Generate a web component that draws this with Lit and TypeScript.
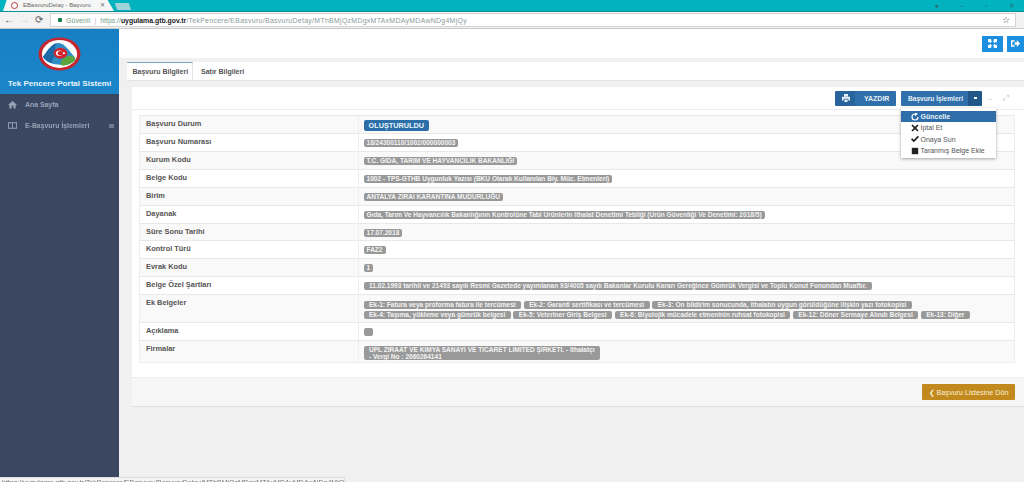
import { LitElement, html, css, svg } from "lit";
import { customElement } from "lit/decorators.js";

const rows: { label: string; badges: string[]; cls?: string }[] = [
  { label: "Başvuru Durum", badges: ["OLUŞTURULDU"], cls: "status" },
  { label: "Başvuru Numarası", badges: ["18/24300110/1002/000000003"] },
  { label: "Kurum Kodu", badges: ["T.C. GIDA, TARIM VE HAYVANCILIK BAKANLIĞI"] },
  { label: "Belge Kodu", badges: ["1002 - TPS-GTHB Uygunluk Yazısı (BKÜ Olarak Kullanılan Biy. Müc. Etmenleri)"] },
  { label: "Birim", badges: ["ANTALYA ZİRAİ KARANTİNA MÜDÜRLÜĞÜ"] },
  { label: "Dayanak", badges: ["Gıda, Tarım Ve Hayvancılık Bakanlığının Kontrolüne Tabi Ürünlerin İthalat Denetimi Tebliği (Ürün Güvenliği Ve Denetimi: 2018/5)"] },
  { label: "Süre Sonu Tarihi", badges: ["17.07.2018"], cls: "short" },
  { label: "Kontrol Türü", badges: ["FAZ2"] },
  { label: "Evrak Kodu", badges: ["1"] },
  { label: "Belge Özel Şartları", badges: ["11.02.1993 tarihli ve 21493 sayılı Resmi Gazetede yayımlanan 93/4005 sayılı Bakanlar Kurulu Kararı Gereğince Gümrük Vergisi ve Toplu Konut Fonundan Muaftır."], cls: "pad" },
  { label: "Ek Belgeler", badges: ["Ek-1: Fatura veya proforma fatura ile tercümesi", "Ek-2: Garanti sertifikası ve tercümesi", "Ek-3: Ön bildirim sonucunda, ithalatın uygun görüldüğüne ilişkin yazı fotokopisi", "Ek-4: Taşıma, yükleme veya gümrük belgesi", "Ek-5: Veteriner Giriş Belgesi", "Ek-6: Biyolojik mücadele etmeninin ruhsat fotokopisi", "Ek-12: Döner Sermaye Alındı Belgesi", "Ek-13: Diğer"], cls: "pad multi" },
  { label: "Açıklama", badges: [""], cls: "empty" },
  { label: "Firmalar", badges: ["UPL ZİRAAT VE KİMYA SANAYİ VE TİCARET LİMİTED ŞİRKETİ. - İthalatçı\n- Vergi No : 2060264141"], cls: "pad firm" },
];

const logo = svg`<svg class="logo" viewBox="0 0 44 44" width="43" height="34" preserveAspectRatio="none">
  <circle cx="22" cy="22" r="21.500" fill="#c6262e"/>
  <circle cx="22" cy="22" r="18" fill="#fff"/>
  <path d="M5 26 C9 19 13 10 19 8 C24 6 29 12 33 19 C36 24 39 27 38 30 C30 39 11 38 5 26Z" fill="#2f8fc4"/>
  <path d="M19 8 C16 14 18 20 22 22 C18 24 15 27 14 34 C10 33 7 29 5 26 C9 19 13 10 19 8Z" fill="#1c6aa8"/>
  <path d="M25 29 C29 24 34 22 38 27 C39 32 31 38 24 37 C23 33 23 31 25 29Z" fill="#5aa63c"/>
  <circle cx="23" cy="21" r="7" fill="#d4222a"/>
  <circle cx="22" cy="21" r="3.600" fill="#fff"/>
  <circle cx="23.200" cy="21" r="3" fill="#d4222a"/>
  <circle cx="26.500" cy="21" r="1.200" fill="#fff"/>
</svg>`;

@customElement("app-root")
export class AppRoot extends LitElement {
  static styles = css`
    :host { display: block; width: 1024px; height: 482px; overflow: hidden; background: #f0f0f0;
      font-family: "Liberation Sans", Arial, sans-serif; color: #444; }
    * { box-sizing: border-box; }
    .page { height: 482px; display: flex; flex-direction: column; filter: blur(0.4px); }
    .tabstrip { height: 12px; background: #00b3bf; display: flex; align-items: flex-end; flex: none; border-bottom: 1px solid #0b8f99; }
    .tab { width: 111px; height: 12px; margin-left: 3px; background: #f6f6f6; display: flex; align-items: center; gap: 5px;
      padding: 0 9px 0 8px; font-size: 5.900px; color: #666; clip-path: polygon(0 100%, 4px 0, 104px 0, 100% 100%); }
    .tab .title { flex: 1; white-space: nowrap; }
    .favicon { width: 7px; height: 7px; border-radius: 50%; background: #fff; border: 1.500px solid #b8353f; flex: none; }
    .newtab { width: 14px; height: 7px; background: #9fd3d8; margin-left: 2px; margin-bottom: 1px; transform: skewX(20deg); }
    .winctl { margin-left: auto; display: flex; align-items: center; height: 11px; padding-right: 0; align-self: flex-start; color: #2a6f78; font-size: 7px; }
    .winctl span { width: 25px; text-align: center; }
    .toolbar { height: 17px; flex: none; background: #f2f2f2; display: flex; align-items: center; padding: 0 8px 0 4px; gap: 5px; border-bottom: 1px solid #c9c9c9; }
    .nav { font-size: 10px; color: #555; width: 10px; text-align: center; line-height: 1; }
    .nav.off { color: #c8c8c8; }
    .omni { flex: 1; height: 14px; margin-left: 1px; background: #fff; border: 1px solid #d4d4d4; display: flex; align-items: center; padding: 0 5px 0 7px; font-size: 6.9px; color: #8a9a9a; white-space: nowrap; }
    .omni .lock { width: 4px; height: 4px; background: #17804a; margin-right: 4px; border-radius: 1px; flex: none; }
    .omni .safe { color: #6f9a84; letter-spacing: .15px; }
    .omni .sep { margin: 0 4px; color: #bbb; }
    .omni .https { color: #6fa08a; }
    .omni .host { color: #222; font-weight: 700; }
    .omni .path { letter-spacing: .32px; }
    .omni .star { margin-left: auto; font-size: 9px; color: #444; }
    .main { flex: 1; display: flex; min-height: 0; }
    .sidebar { width: 119px; flex: none; background: #3b4761; display: flex; flex-direction: column; }
    .brand { height: 65px; background: linear-gradient(#1780c4, #1a86c9); display: flex; flex-direction: column; align-items: center; padding-top: 8px; color: #e8f4fb; flex: none; }
    .brand b { font-size: 8.1px; margin-top: 8px; white-space: nowrap; }
    .menu { display: flex; align-items: center; height: 21px; padding-left: 8px; gap: 8px; font-size: 6.9px; font-weight: 700; color: #96a3b5; }
    .menu svg { width: 9px; height: 9px; fill: #96a3b5; flex: none; }
    .menu .grip { margin-left: auto; margin-right: 5px; width: 5px; height: 4px; background: #6d7a90; }
    .content { flex: 1; min-width: 0; display: flex; flex-direction: column; }
    .topbar { height: 29px; flex: none; background: #fff; display: flex; justify-content: flex-end; align-items: center; gap: 4px; }
    .sq { width: 21px; height: 16px; background: #1d8fe0; display: flex; align-items: center; justify-content: center; }
    .sq.last { width: 17px; }
    .sq svg { width: 9px; height: 9px; fill: #fff; }
    .area { flex: 1; padding: 4px 0 0 8px; min-height: 0; }
    .tabs { height: 19px; background: #fff; display: flex; font-size: 7px; font-weight: 700; color: #555; border-bottom: 1px solid #e4e4e4; white-space: nowrap; }
    .tabs span { display: flex; align-items: center; padding: 0 5.500px; }
    .tabs .on { width: 66px; border-top: 1.500px solid #7aa6c8; border-right: 1px solid #e4e4e4; background: #fff; }
    .tabs span + span { padding-left: 8px; }
    .panel { margin: 6px 0 0 5px; background: #fff; position: relative; border-bottom: 1px solid #e2e2e2; }
    .phead { height: 23px; display: flex; justify-content: flex-end; align-items: center; border-bottom: 1px solid #ececec; padding-right: 10px; }
    .btn { height: 15px; background: #2b6aa3; color: #e8f0f7; font-size: 7px; font-weight: 700; display: flex; align-items: center; border-radius: 1px; white-space: nowrap; }
    .print { width: 61px; margin-right: 5px; padding-left: 7px; background: linear-gradient(90deg, #28659c 20px, #2f70ab 20px); }
    .print svg { width: 8px; height: 8px; fill: #e8f0f7; }
    .print span { margin-left: 14px; }
    .ops { width: 81px; padding-left: 7px; font-size: 6.600px; background: linear-gradient(90deg, #2f70ab 67px, #22578a 67px); }
    .ops i { margin-left: auto; margin-right: 5px; border-top: 2px solid #fff; width: 3px; height: 0; }
    .mini { color: #ccc; font-size: 8px; width: 16px; text-align: center; }
    .dropdown { position: absolute; top: 21px; left: 769px; width: 95px; height: 50px; background: #fff; box-shadow: 0 1px 3px rgba(0,0,0,.35); padding-top: 3px; font-size: 7px; color: #555; z-index: 2; }
    .dropdown div { height: 11.300px; display: flex; align-items: center; gap: 1.500px; padding-left: 10px; white-space: nowrap; }
    .dropdown .hi { background: #2f6ea8; color: #e8f2fa; font-weight: 700; }
    .dropdown svg { width: 8px; height: 8px; flex: none; fill: #222; }
    .dropdown .hi svg { fill: #fff; }
    .pbody { padding: 5px 9px 14px 7px; }
    table { width: 876px; border-collapse: collapse; border: 1px solid #eee; table-layout: fixed; }
    td { border-top: 1px solid #e8e8e8; vertical-align: top; height: 18px; padding: 0; }
    tr:nth-child(odd) td { background: #f9f9f9; }
    td.l { width: 219px; font-size: 7.400px; font-weight: 700; color: #555; padding: 3px 6px 0; border-right: 1px solid #eee; white-space: nowrap; }
    td.v { padding: 5px 4.500px 0; line-height: 0; }
    .badge { display: inline-block; background: #999; color: #f4f4f4; font-size: 6.550px; font-weight: 700; line-height: 8px; height: 8px; border-radius: 2px; padding: 0 3px; white-space: nowrap; vertical-align: top; margin-right: 2.500px; margin-bottom: 1.500px; }
    .pad .badge { padding: 0 5.500px; }
    .multi td.v { padding-top: 6px; }
    .status .badge { background: #2b6ea8; height: 11px; line-height: 11px; font-size: 7.300px; padding: 0 5px; color: #e8f4ff; margin-top: -1px; margin-bottom: 0; }
    .firm .badge { height: 14px; line-height: 6.500px; white-space: pre-line; padding-top: 1px; margin-bottom: 0; }
    .empty .badge { width: 9px; margin-bottom: 0; }
    tr.short td { height: 17px; }
    tr.firm td { height: 22px; }
    tr.multi td { height: 28px; }
    .pfoot { height: 29px; background: #f6f6f6; border-top: 1px solid #ececec; display: flex; justify-content: flex-end; align-items: center; padding-right: 9px; }
    .back { width: 93px; height: 16px; background: #c28a1e; color: #f8efd8; font-size: 7.200px; display: flex; align-items: center; justify-content: center; gap: 2px; border-radius: 1px; white-space: nowrap; }
    .status-bar { height: 5px; flex: none; overflow: hidden; background: #f0f0f0; }
    .status-bar div { width: 345px; height: 5px; background: #f4f4f4; border-top: 1px solid #ddd; border-right: 1px solid #ddd; font-size: 7px; line-height: 9px; color: #777; white-space: nowrap; overflow: hidden; padding-left: 2px; }
  `;

  render() {
    return html`<div class="page">
      <div class="tabstrip">
        <div class="tab"><span class="favicon"></span><span class="title">EBasvuruDetay - Başvuru</span><span>✕</span></div>
        <div class="newtab"></div>
        <div class="winctl"><span>●</span><span>–</span><span>▫</span><span>✕</span></div>
      </div>
      <div class="toolbar">
        <span class="nav">←</span><span class="nav off">→</span><span class="nav">⟳</span>
        <div class="omni"><span class="lock"></span><span class="safe">Güvenli</span><span class="sep">|</span><span class="https">https://</span><span class="host">uygulama.gtb.gov.tr</span><span class="path">/TekPencere/EBasvuru/BasvuruDetay/MThBMjQzMDgxMTAxMDAyMDAwNDg4MjQy</span><span class="star">☆</span></div>
      </div>
      <div class="main">
        <aside class="sidebar">
          <div class="brand">${logo}<b>Tek Pencere Portal Sistemi</b></div>
          <div class="menu"><svg viewBox="0 0 10 10"><path d="M5 1 L10 5.500 H8.500 V9.500 H6 V6.500 H4 V9.500 H1.500 V5.500 H0Z"/></svg>Ana Sayfa</div>
          <div class="menu"><svg viewBox="0 0 10 10"><path d="M0 1.500h10v7H0z M1 2.500v5h3.500v-5z M5.500 2.500v5H9v-5z" fill-rule="evenodd"/></svg>E-Başvuru İşlemleri<span class="grip"></span></div>
        </aside>
        <section class="content">
          <div class="topbar">
            <div class="sq"><svg viewBox="0 0 10 10"><path d="M0 0h4L3 1l1.500 1.500-2 2L1 3 0 4z M10 0v4L9 3 7.500 4.500l-2-2L7 1 6 0z M0 10V6l1 1 1.500-1.500 2 2L3 9l1 1z M10 10H6l1-1-1.500-1.500 2-2L9 7l1-1z"/></svg></div>
            <div class="sq last"><svg viewBox="0 0 10 10"><path d="M0 1.500h4v1.500H1.500v4H4v1.500H0z M4 3.500h2.500V1L10 5 6.500 9V6.500H4z"/></svg></div>
          </div>
          <div class="area">
            <div class="tabs"><span class="on">Başvuru Bilgileri</span><span>Satır Bilgileri</span></div>
            <div class="panel">
              <div class="phead">
                <div class="btn print"><svg viewBox="0 0 10 10"><path d="M2.500 0h5v3h-5z M0 3.500h10V8H8V6H2v2H0z M3 7h4v3H3z"/></svg><span>YAZDIR</span></div>
                <div class="btn ops">Başvuru İşlemleri<i></i></div>
                <span class="mini">–</span><span class="mini">⤢</span>
              </div>
              <div class="dropdown">
                <div class="hi"><svg viewBox="0 0 10 10"><path d="M5 0.500a4.500 4.500 0 1 0 4.500 4.500H8A3 3 0 1 1 5 2v2l3.500-2.700L5 -1z"/></svg>Güncelle</div>
                <div><svg viewBox="0 0 10 10"><path d="M2 .5 5 3.500 8 .5 9.500 2 6.500 5l3 3L8 9.500l-3-3-3 3L.5 8l3-3-3-3z"/></svg>İptal Et</div>
                <div><svg viewBox="0 0 10 10"><path d="M0 5.500 1.500 4l2 2L8.500 1 10 2.500 3.500 9z"/></svg>Onaya Sun</div>
                <div><svg viewBox="0 0 10 10"><path d="M1 1h8v8H1z"/></svg>Taranmış Belge Ekle</div>
              </div>
              <div class="pbody">
                <table>
                  ${rows.map((r) => html`<tr class="${r.cls ?? ""}">
                    <td class="l">${r.label}</td>
                    <td class="v">${r.badges.map((b) => html`<span class="badge">${b}</span>`)}</td>
                  </tr>`)}
                </table>
              </div>
              <div class="pfoot"><div class="back">❮ Başvuru Listesine Dön</div></div>
            </div>
          </div>
        </section>
      </div>
      <div class="status-bar"><div>https://uygulama.gtb.gov.tr/TekPencere/EBasvuru/BasvuruDetay/MThBMjQzMDgxMTAxMDAyMDAwNDg4MjQy</div></div>
    </div>`;
  }
}
